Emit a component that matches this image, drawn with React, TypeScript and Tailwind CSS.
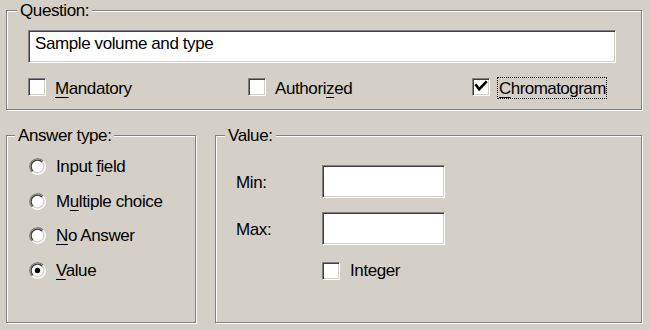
import React from "react";

const sunken =
  "bg-white border border-t-[#808080] border-l-[#808080] border-r-white border-b-white shadow-[inset_1px_1px_0_#404040,inset_-1px_-1px_0_#d4d0c8]";

function CheckBox({ checked = false }: { checked?: boolean }) {
  return (
    <div className={`w-[18px] h-[18px] shrink-0 ${sunken}`}>
      {checked && (
        <svg width="16" height="16" viewBox="0 0 16 16" className="block">
          <path d="M3.2 6.2 L6.2 10.2 L12.8 3.4" fill="none" stroke="#000" strokeWidth="2.6" strokeLinecap="square" strokeLinejoin="miter" />
        </svg>
      )}
    </div>
  );
}

function Radio({ checked = false }: { checked?: boolean }) {
  return (
    <svg width="17" height="17" viewBox="0 0 17 17" className="block shrink-0">
      <circle cx="8.5" cy="8.5" r="7.75" fill="#fff" stroke="#fff" strokeWidth="1.5" />
      <path d="M3.02 13.98 A7.75 7.75 0 0 1 13.98 3.02" fill="none" stroke="#808080" strokeWidth="1.5" />
      <circle cx="8.5" cy="8.5" r="6.4" fill="none" stroke="#d4d0c8" strokeWidth="1.3" />
      <path d="M3.97 13.03 A6.4 6.4 0 0 1 13.03 3.97" fill="none" stroke="#404040" strokeWidth="1.3" />
      {checked && <circle cx="8.5" cy="8.5" r="2.7" fill="#000" />}
    </svg>
  );
}

function U({ children }: { children: React.ReactNode }) {
  return <u className="underline underline-offset-[3px]">{children}</u>;
}

const groupCls =
  "m-0 p-0 min-w-0 border border-[#808080] shadow-[inset_1px_1px_0_#fff,1px_1px_0_#fff]";

function RadioRow({ checked, children }: { checked?: boolean; children: React.ReactNode }) {
  return (
    <div className="flex items-center h-[19px] gap-[10px]">
      <Radio checked={checked} />
      <span className="whitespace-nowrap">{children}</span>
    </div>
  );
}

export default function App() {
  return (
    <div className="w-[650px] h-[330px] overflow-hidden bg-[#d4d0c8] text-black font-['Liberation_Sans',Arial,sans-serif] text-[17px] tracking-[-0.4px] leading-[19px] pt-[1px] pl-[6px]">
      <fieldset className={`${groupCls} w-[636px] h-[109px]`}>
        <legend className="ml-[10px] px-[3px] leading-[19px] bg-[#d4d0c8]">Question:</legend>
        <div className="pl-[21px] pt-[10px]">
          <div className={`w-[588px] h-[33px] pl-[6px] pt-[3px] ${sunken}`}>Sample volume and type</div>
          <div className="flex items-start mt-[15px]">
            <div className="flex items-start w-[220px]">
              <CheckBox />
              <span className="ml-[9px] mt-[1px]">
                <U>M</U>andatory
              </span>
            </div>
            <div className="flex items-start w-[224px]">
              <CheckBox />
              <span className="ml-[9px] mt-[1px]">
                Authori<U>z</U>ed
              </span>
            </div>
            <div className="flex items-start">
              <CheckBox checked />
              <span className="ml-[7px] mt-[-1px] pt-[1px] pl-[1px] pr-0 border border-dotted border-black leading-[19px] h-[22px] tracking-[-0.55px]">
                <U>C</U>hromatogram
              </span>
            </div>
          </div>
        </div>
      </fieldset>

      <div className="flex mt-[16px] gap-[19px]">
        <fieldset className={`${groupCls} w-[190px] h-[197px]`}>
          <legend className="ml-[8px] px-[3px] leading-[19px] bg-[#d4d0c8]">Answer type:</legend>
          <div className="pl-[22px] pt-[12px] flex flex-col gap-[15.67px]">
            <RadioRow>
              Input <U>f</U>ield
            </RadioRow>
            <RadioRow>
              M<U>u</U>ltiple choice
            </RadioRow>
            <RadioRow>
              <U>N</U>o Answer
            </RadioRow>
            <RadioRow checked>
              <U>V</U>alue
            </RadioRow>
          </div>
        </fieldset>

        <fieldset className={`${groupCls} w-[427px] h-[197px]`}>
          <legend className="ml-[9px] px-[3px] leading-[19px] bg-[#d4d0c8]">Value:</legend>
          <div className="pl-[20px] pt-[20px] grid grid-cols-[86px_123px] gap-y-[14px]">
            <span className="pt-[8px]">Min:</span>
            <div className={`h-[33px] ${sunken}`} />
            <span className="pt-[8px]">Max:</span>
            <div className={`h-[33px] ${sunken}`} />
            <span />
            <div className="flex items-center gap-[10px] mt-[2px]">
              <CheckBox />
              <span>Integer</span>
            </div>
          </div>
        </fieldset>
      </div>
    </div>
  );
}
